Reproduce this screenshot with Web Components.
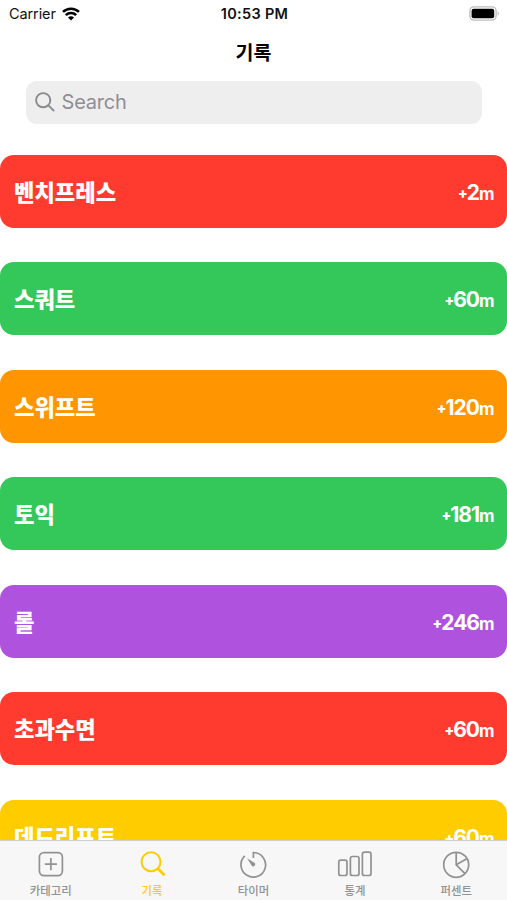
<!DOCTYPE html>
<html lang="ko">
<head>
<meta charset="UTF-8">
<title>기록</title>
<style>
    html, body {
        margin: 0;
        height: 100%;
        overflow: hidden;
        background: #fff;
    }

    body {
        font-family: Inter, "Noto Sans CJK KR", sans-serif;
    }
</style>
</head>
<body>
<record-app>
    <status-bar slot="top" carrier="Carrier" time="10:53 PM"></status-bar>
    <nav-title slot="top">기록</nav-title>
    <search-field slot="top">Search</search-field>

    <record-row color="#ff3b30" minutes="2">벤치프레스</record-row>
    <record-row color="#34c759" minutes="60">스쿼트</record-row>
    <record-row color="#ff9500" minutes="120">스위프트</record-row>
    <record-row color="#34c759" minutes="181">토익</record-row>
    <record-row color="#af52de" minutes="246">롤</record-row>
    <record-row color="#ff3b30" minutes="60">초과수면</record-row>
    <record-row color="#ffcc00" minutes="60">데드리프트</record-row>

    <tab-bar slot="bottom">
        <tab-item icon="plus">카테고리</tab-item>
        <tab-item icon="search" active>기록</tab-item>
        <tab-item icon="timer">타이머</tab-item>
        <tab-item icon="bars">통계</tab-item>
        <tab-item icon="pie">퍼센트</tab-item>
    </tab-bar>
</record-app>

<script>
class RecordApp extends HTMLElement {
    constructor() {
        super();
        this.attachShadow({ mode: "open" }).innerHTML = `
        <style>
        :host {
            display: flex;
            flex-direction: column;
            height: 100vh;
        }

        .list {
            flex: 1;
            min-height: 0;
            overflow: hidden;
            display: flex;
            flex-direction: column;
            gap: 34.2px;
            padding-top: 30.6px;
        }
        </style>
        <slot name="top"></slot>
        <div class="list"><slot></slot></div>
        <slot name="bottom"></slot>
        `;
    }
}

class StatusBar extends HTMLElement {
    constructor() {
        super();
        this.attachShadow({ mode: "open" }).innerHTML = `
        <style>
        :host {
            display: grid;
            grid-template-columns: 1fr auto 1fr;
            align-items: center;
            height: 27px;
            padding: 0 7px 0 9px;
            font-size: 14.5px;
            color: #111;
        }

        .left {
            display: flex;
            align-items: center;
            gap: 6px;
            letter-spacing: -0.1px;
        }

        .time {
            font-weight: 600;
            font-size: 14.5px;
            letter-spacing: 0.3px;
        }

        .battery {
            justify-self: end;
        }

        svg {
            display: block;
        }
        </style>
        <div class="left">
            <span>${this.getAttribute("carrier")}</span>
            <svg width="18" height="14" viewBox="0 0 18 14" fill="none" stroke="#000" stroke-width="2.6">
                <path d="M1 4.9a11.6 11.6 0 0 1 16 0"/>
                <path d="M3.8 8.1a7.5 7.5 0 0 1 10.4 0"/>
                <path d="M9 13.6L6 10.6a4.3 4.3 0 0 1 6 0z" fill="#000" stroke="none"/>
            </svg>
        </div>
        <span class="time">${this.getAttribute("time")}</span>
        <svg class="battery" width="31" height="15" viewBox="0 0 31 15">
            <rect x=".9" y=".9" width="26.2" height="13.2" rx="4" fill="#fff" stroke="#bdbdbd" stroke-width="1.4"/>
            <rect x="2.6" y="2.7" width="22.6" height="9.6" rx="2" fill="#000"/>
            <path d="M28.6 5.2a2.6 2.6 0 0 1 0 4.6z" fill="#bdbdbd"/>
        </svg>
        `;
    }
}

class NavTitle extends HTMLElement {
    constructor() {
        super();
        this.attachShadow({ mode: "open" }).innerHTML = `
        <style>
        :host {
            display: flex;
            justify-content: center;
            align-items: center;
            height: 50px;
            font: 700 19.5px/50px "Noto Sans CJK KR", sans-serif;
            color: #000;
        }
        </style>
        <slot></slot>
        `;
    }
}

class SearchField extends HTMLElement {
    constructor() {
        super();
        this.attachShadow({ mode: "open" }).innerHTML = `
        <style>
        :host {
            display: flex;
            align-items: center;
            gap: 7px;
            height: 43px;
            margin: 4px 25px 0 25.5px;
            padding: 0 0 2px 9px;
            box-sizing: border-box;
            border-radius: 11px;
            background: #eee;
            color: #8e8e93;
            font-size: 20px;
            letter-spacing: -0.2px;
        }
        </style>
        <svg width="20" height="20" viewBox="0 0 20 20" fill="none" stroke="#8a8a8e" stroke-width="1.9">
            <circle cx="8.2" cy="8.2" r="7.1"/>
            <path d="M13.4 13.4l5.8 5.8"/>
        </svg>
        <slot></slot>
        `;
    }
}

class RecordRow extends HTMLElement {
    constructor() {
        super();
        this.attachShadow({ mode: "open" }).innerHTML = `
        <style>
        :host {
            flex: none;
            display: flex;
            justify-content: space-between;
            align-items: flex-start;
            height: 73.3px;
            padding: 0 12.5px 0 14px;
            box-sizing: border-box;
            border-radius: 14px;
            background: ${this.getAttribute("color")};
            color: #fff;
            font: 900 22.2px/72px "Noto Sans CJK KR", sans-serif;
        }

        .minutes {
            font: 700 21px/75px Inter, sans-serif;
            letter-spacing: -1px;
        }

        .plus {
            font-size: 14px;
            font-weight: 900;
            line-height: 1;
            vertical-align: 2px;
        }

        .unit {
            font-size: 17px;
            line-height: 1;
            letter-spacing: 0;
        }
        </style>
        <span><slot></slot></span>
        <span class="minutes"><span class="plus">+</span>${this.getAttribute("minutes")}<span class="unit">m</span></span>
        `;
    }
}

class TabBar extends HTMLElement {
    constructor() {
        super();
        this.attachShadow({ mode: "open" }).innerHTML = `
        <style>
        :host {
            display: grid;
            grid-template-columns: repeat(5, 1fr);
            height: 60px;
            box-sizing: border-box;
            border-top: 1px solid #d0d0d2;
            background: #f7f7f7;
        }
        </style>
        <slot></slot>
        `;
    }
}

const icons = {
    plus: `<rect x="4.4" y="3.6" width="23" height="23" rx="4.5"/><path d="M15.9 9v12.2M9.8 15.1H22"/>`,
    search: `<circle cx="14" cy="12.8" r="9.5" stroke-width="2"/><path d="M20.8 19.6l6.6 6.6" stroke-width="2.8"/>`,
    timer: `<path d="M15.4 9V3.5a12.3 12.3 0 1 1-8.6 3.4"/><path d="M9 9.2l7.8 4.9a2 2 0 0 1-2.8 2.8z" fill="currentColor" stroke="none"/>`,
    bars: `<rect x="-.2" y="11.2" width="8.2" height="15.3" rx="2"/><rect x="11.4" y="7.5" width="8.6" height="19" rx="2"/><rect x="23.4" y="3.2" width="8.6" height="23.3" rx="2"/>`,
    pie: `<circle cx="15.2" cy="15.8" r="12.5"/><path d="M15.2 3.3v12.5l8.8 8.9M15.2 15.8l11-6.3"/>`
};

class TabItem extends HTMLElement {
    constructor() {
        super();
        this.attachShadow({ mode: "open" }).innerHTML = `
        <style>
        :host {
            display: flex;
            flex-direction: column;
            align-items: center;
            padding-top: 8px;
            color: #929292;
            font: 500 11.4px/20px "Noto Sans CJK KR", sans-serif;
        }

        :host([active]) {
            color: #fc0;
        }

        svg {
            display: block;
            overflow: visible;
        }
        </style>
        <svg width="31" height="31" viewBox="0 0 31 31" fill="none" stroke="currentColor" stroke-width="1.7">${icons[this.getAttribute("icon")]}</svg>
        <span><slot></slot></span>
        `;
    }
}

customElements.define("record-app", RecordApp);
customElements.define("status-bar", StatusBar);
customElements.define("nav-title", NavTitle);
customElements.define("search-field", SearchField);
customElements.define("record-row", RecordRow);
customElements.define("tab-bar", TabBar);
customElements.define("tab-item", TabItem);
</script>
</body>
</html>
